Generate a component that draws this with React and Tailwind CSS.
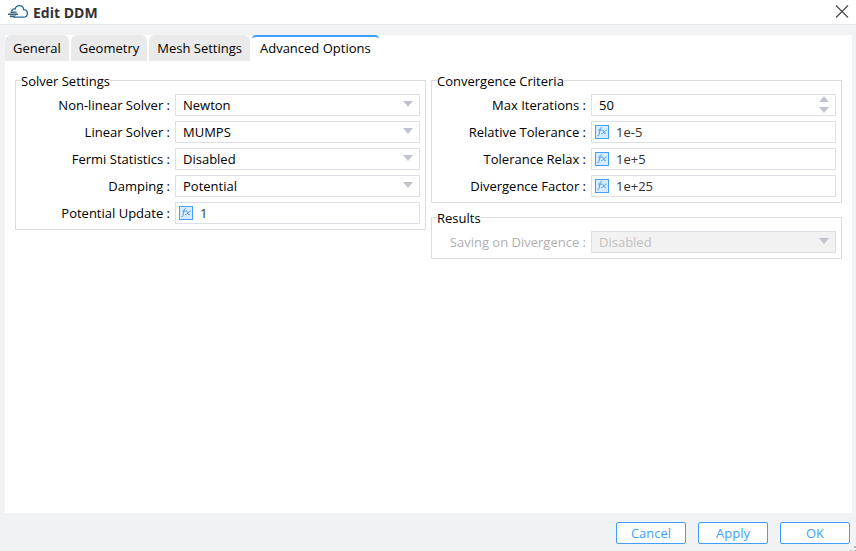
import React, { useState } from "react";

const TABS = ["General", "Geometry", "Mesh Settings", "Advanced Options"];

function CloudLogo() {
  return (
    <svg width="22" height="16" viewBox="0 0 22 16" fill="none" aria-hidden="true">
      <path
        d="M4.5 7.5C5 5.4 6.5 4.8 8.2 5C8.7 2.6 10.2 1.7 12.3 1.7C14.8 1.7 16.4 3.2 16.7 5.6C19 5.7 20.4 7.2 20.4 9.2C20.4 11.7 18.8 13.2 16.4 13.2H6.5"
        stroke="#1c6a97"
        strokeWidth="1.3"
      />
      <path d="M3.5 8.2H9.5M1 10.3H11M3 12.4H8" stroke="#34607c" strokeWidth="1.5" />
      <path d="M6 9.2H10M3 11.4H9" stroke="#8fa9ba" strokeWidth="1" />
    </svg>
  );
}

function Triangle({ up = false }) {
  return (
    <svg width="10" height="6" viewBox="0 0 10 6" className="block" aria-hidden="true">
      <path d={up ? "M5 0L10 6H0Z" : "M0 0H10L5 6Z"} fill="#c0c4cc" />
    </svg>
  );
}

function FxIcon() {
  return (
    <svg width="14" height="14" viewBox="0 0 14 14" fill="none" className="shrink-0" aria-hidden="true">
      <rect x="0.5" y="0.5" width="13" height="13" fill="#d9ecff" stroke="#409eff" />
      <path
        d="M7 2.9C6 2.3 5.4 2.9 5.1 4.1L4 9.4C3.8 10.6 3.2 11.1 2.3 10.7M3.4 5.1H6.5"
        stroke="#409eff"
        strokeWidth="1"
      />
      <path
        d="M6.7 5.3C7.8 4.6 8.2 5.2 8.6 6.6C9 8.4 9.5 9 10.9 8.1M11.6 5C10.2 4.6 7.9 9.2 6.3 8.6"
        stroke="#409eff"
        strokeWidth="1"
      />
    </svg>
  );
}

function Group({ title, children }) {
  return (
    <fieldset className="min-w-0 border border-[#dcdcdf] px-[5px] pt-1 pb-[5px]">
      <legend className="pt-px leading-[18px]">{title}</legend>
      <div className="flex flex-col gap-[5px]">{children}</div>
    </fieldset>
  );
}

function Row({ id, label, disabled = false, children }) {
  return (
    <div className="grid h-[22px] grid-cols-[149px_minmax(0,1fr)] items-center gap-[5px]">
      <label
        htmlFor={id}
        className={`pt-px text-right leading-[21px] whitespace-nowrap ${disabled ? "text-[#b0b0b0]" : ""}`}
      >
        {label} :
      </label>
      {children}
    </div>
  );
}

function SelectRow({ id, label, options, disabled = false }) {
  return (
    <Row id={id} label={label} disabled={disabled}>
      <div className="relative">
        <select
          id={id}
          disabled={disabled}
          className="block h-[22px] w-full appearance-none border border-[#dcdfe6] bg-white pt-px pr-6 pl-[7px] text-black outline-none focus:border-[#409eff] disabled:bg-[#f2f2f2] disabled:text-[#c0c0c0] disabled:opacity-100"
        >
          {options.map((option) => (
            <option key={option}>{option}</option>
          ))}
        </select>
        <span className="pointer-events-none absolute top-[7px] right-[7px]">
          <Triangle />
        </span>
      </div>
    </Row>
  );
}

function FxRow({ id, label, value }) {
  return (
    <Row id={id} label={label}>
      <div className="flex h-[22px] items-center gap-[7px] border border-[#dcdfe6] bg-white px-[3px] focus-within:border-[#409eff]">
        <FxIcon />
        <input id={id} type="text" defaultValue={value} className="h-5 min-w-0 flex-1 text-[#333333] outline-none" />
      </div>
    </Row>
  );
}

function SpinRow({ id, label, initial }) {
  const [value, setValue] = useState(initial);
  return (
    <Row id={id} label={label}>
      <div className="flex h-[22px] border border-[#dcdfe6] bg-white pr-[6px] pl-[7px] focus-within:border-[#409eff]">
        <input
          id={id}
          type="text"
          inputMode="numeric"
          value={value}
          onChange={(e) => setValue(Number(e.target.value) || 0)}
          className="h-5 min-w-0 flex-1 outline-none"
        />
        <div className="flex flex-col gap-[5px] pt-px">
          <button type="button" aria-label="Increase" onClick={() => setValue(value + 1)}>
            <Triangle up />
          </button>
          <button type="button" aria-label="Decrease" onClick={() => setValue(value - 1)}>
            <Triangle />
          </button>
        </div>
      </div>
    </Row>
  );
}

function DialogButton({ children }) {
  return (
    <button
      type="button"
      className="h-[22px] w-[70px] rounded-xs border border-[#409eff] bg-white leading-5 text-[#409eff] hover:bg-[#ecf5ff]"
    >
      {children}
    </button>
  );
}

export default function App() {
  const [active, setActive] = useState("Advanced Options");
  return (
    <div className="flex min-h-screen flex-col bg-[#f0f2f4] font-['Open_Sans',sans-serif] text-[13px] text-black">
      <header className="flex h-[25px] items-center border-b border-[#e6ebf0] bg-white px-[7px]">
        <CloudLogo />
        <h1 className="ml-1 flex-1 text-[14px] font-bold text-[#333333]">Edit DDM</h1>
        <button type="button" aria-label="Close">
          <svg width="14" height="14" viewBox="0 0 14 14" className="block" aria-hidden="true">
            <path d="M1 0.5L13 12.5M13 0.5L1 12.5" stroke="#4a4a4a" strokeWidth="1.2" />
          </svg>
        </button>
      </header>

      <main className="mt-[10px] mr-1 ml-[5px] flex-1 bg-white">
        <div role="tablist" className="flex gap-[2px]">
          {TABS.map((tab) => (
            <button
              key={tab}
              type="button"
              role="tab"
              aria-selected={tab === active}
              onClick={() => setActive(tab)}
              className={
                tab === active
                  ? "h-[26px] rounded-t border-t-2 border-[#409eff] bg-white px-2 pb-px whitespace-nowrap"
                  : "h-[26px] rounded-t-md bg-[#eaeaea] px-2 pt-px whitespace-nowrap"
              }
            >
              {tab}
            </button>
          ))}
        </div>

        <div className="grid grid-cols-2 items-start gap-[5px] p-[10px]">
          <Group title="Solver Settings">
            <SelectRow id="nonlinear" label="Non-linear Solver" options={["Newton", "Gummel"]} />
            <SelectRow id="linear" label="Linear Solver" options={["MUMPS", "SuperLU"]} />
            <SelectRow id="fermi" label="Fermi Statistics" options={["Disabled", "Enabled"]} />
            <SelectRow id="damping" label="Damping" options={["Potential", "None"]} />
            <FxRow id="update" label="Potential Update" value="1" />
          </Group>
          <div className="flex min-w-0 flex-col gap-[5px]">
            <Group title="Convergence Criteria">
              <SpinRow id="iterations" label="Max Iterations" initial={50} />
              <FxRow id="tolerance" label="Relative Tolerance" value="1e-5" />
              <FxRow id="relax" label="Tolerance Relax" value="1e+5" />
              <FxRow id="divergence" label="Divergence Factor" value="1e+25" />
            </Group>
            <Group title="Results">
              <SelectRow id="saving" label="Saving on Divergence" options={["Disabled", "Enabled"]} disabled />
            </Group>
          </div>
        </div>
      </main>

      <footer className="relative flex h-[38px] justify-end gap-3 pt-[9px] pr-[6px]">
        <DialogButton>Cancel</DialogButton>
        <DialogButton>Apply</DialogButton>
        <DialogButton>OK</DialogButton>
        <svg width="6" height="5" viewBox="0 0 6 5" className="absolute right-0 bottom-0" aria-hidden="true">
          <path d="M4 0H6V2H4ZM0 4H2V5H0ZM4 4H6V5H4Z" fill="#b8b8b8" />
        </svg>
      </footer>
    </div>
  );
}
